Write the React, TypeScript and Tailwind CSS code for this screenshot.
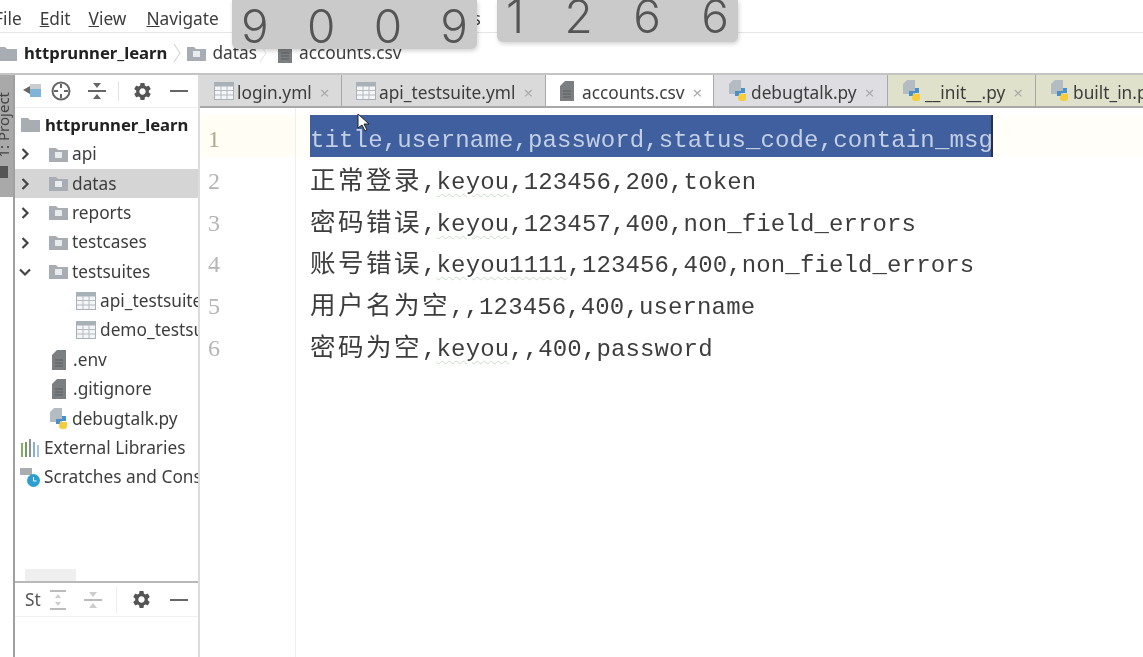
import React from 'react';
import { MdSettings } from 'react-icons/md';

const FolderIcon = ({ big = false }: { big?: boolean }) => (
  <svg width={big ? 21 : 19} height="15" viewBox="0 0 19 15" className="shrink-0">
    <path d="M0 1h7l2 2h10v12H0z" fill="#a7adb2" />
    {!big && <rect x="6" y="5" width="7" height="6" fill="#e9ecee" />}
  </svg>
);

const TableIcon = () => (
  <svg width="20" height="18" viewBox="0 0 20 18" className="shrink-0">
    <rect x="0.5" y="0.5" width="19" height="17" fill="#f3f5f7" stroke="#a9b1b8" />
    <rect x="0.5" y="0.5" width="19" height="4" fill="#a9b1b8" />
    <path d="M7 4v13M13 4v13M1 8.5h18M1 13h18" stroke="#b4bbc1" fill="none" />
  </svg>
);

const FileIcon = () => (
  <svg width="14" height="20" viewBox="0 0 14 20" className="shrink-0">
    <path d="M5 0h9v20H0V5z" fill="#7b7f82" />
    <path d="M3 10h8M3 13h8M3 16h8" stroke="#5b5e61" />
  </svg>
);

const PyIcon = () => (
  <svg width="20" height="22" viewBox="0 0 20 22" className="shrink-0">
    <path d="M5 0h8v14H1V4z" fill="#b4bcc3" />
    <path d="M7 11h6V8h4v5h-6v3H7z" fill="#4a90c8" />
    <path d="M11 14h7v4a3 3 0 0 1-3 3h-2a3 3 0 0 1-3-3z" fill="#f5cc3c" />
  </svg>
);

const Gear = ({ size = 21 }: { size?: number }) => <MdSettings size={size} color="#555" />;

const Minus = () => <div className="h-[2px] w-[18px] bg-[#666]" />;

const Chevron = ({ open = false }: { open?: boolean }) => (
  <svg width="12" height="12" viewBox="0 0 12 12" className="shrink-0">
    <path d={open ? 'M1 3.5l5 5 5-5' : 'M3.5 1l5 5-5 5'} stroke="#444" strokeWidth="2.2" fill="none" />
  </svg>
);

const Crumb = ({ color }: { color: string }) => (
  <svg width="8" height="20" viewBox="0 0 8 20" className="shrink-0">
    <path d="M1 1l6 9-6 9" stroke={color} fill="none" />
  </svg>
);

const Row = ({
  pad,
  icon,
  label,
  arrow,
  active,
  bold,
}: {
  pad: number;
  icon: React.ReactNode;
  label: string;
  arrow?: 'open' | 'closed';
  active?: boolean;
  bold?: boolean;
}) => (
  <div
    className={`relative flex h-[29.4px] items-center overflow-hidden whitespace-nowrap ${active ? 'bg-[#d5d5d5]' : ''} ${bold ? 'text-[16.7px] font-bold text-[#222]' : 'text-[#3d3d3d]'}`}
    style={{ paddingLeft: pad }}
  >
    {arrow && (
      <div className="absolute left-[4px] top-[9px]">
        <Chevron open={arrow === 'open'} />
      </div>
    )}
    <div className="mr-[4px] flex items-center justify-end">{icon}</div>
    {label}
  </div>
);

const Tab = ({
  w,
  bg,
  icon,
  label,
}: {
  w: string;
  bg: string;
  icon: React.ReactNode;
  label: string;
}) => (
  <div className={`flex h-full shrink-0 items-center gap-[3px] overflow-hidden whitespace-nowrap border-r border-[#a8a8a8] pl-[14px] text-[#3d3d3d] ${w} ${bg}`}>
    {icon}
    <span className="relative top-[2px]">{label}</span>
    <span className="relative top-[2px] ml-[5px] text-[17px] leading-none text-[#aaa]">×</span>
  </div>
);

const Cn = ({ children }: { children: string }) => (
  <span className="text-[25.5px] tracking-[2.5px] [font-family:'Noto_Sans_CJK_SC',sans-serif]">{children}</span>
);

const Ky = ({ children }: { children: string }) => (
  <span className="underline decoration-[#c9dcc9] decoration-wavy decoration-1 underline-offset-4">{children}</span>
);

const Counter = ({ digits, className }: { digits: string[]; className: string }) => (
  <div className={`absolute flex justify-between rounded-b-[6px] bg-[#cacaca] text-[46px] font-light text-[#555] shadow-[1px_2px_4px_rgba(0,0,0,0.18)] [font-family:Inter,sans-serif] ${className}`}>
    {digits.map((d, i) => (
      <span key={i}>{d}</span>
    ))}
  </div>
);

const lines: React.ReactNode[] = [
  <span className="inline-block h-[42px] bg-[#3f5f9f] align-top leading-[51px] text-[#c3cfe4] shadow-[inset_-2px_0_0_#26324c]">
    title,username,password,status_code,contain_msg
  </span>,
  <>
    <Cn>正常登录</Cn>,<Ky>keyou</Ky>,123456,200,token
  </>,
  <>
    <Cn>密码错误</Cn>,<Ky>keyou</Ky>,123457,400,non_field_errors
  </>,
  <>
    <Cn>账号错误</Cn>,<Ky>keyou1111</Ky>,123456,400,non_field_errors
  </>,
  <>
    <Cn>用户名为空</Cn>,,123456,400,username
  </>,
  <>
    <Cn>密码为空</Cn>,<Ky>keyou</Ky>,,400,password
  </>,
];

export default function App() {
  return (
    <div className="relative flex h-[657px] w-[1143px] flex-col overflow-hidden bg-white text-[17.3px] text-[#333] blur-[0.5px] [font-family:'Noto_Sans','Open_Sans',sans-serif]">
      {/* menu bar */}
      <div className="flex h-[33px] shrink-0 items-center gap-[18px] border-b border-[#e6e6e6] pt-[5px] text-[#3d3d3d]">
        <span className="-ml-[6px]">File</span>
        <span>
          <u>E</u>dit
        </span>
        <span>
          <u>V</u>iew
        </span>
        <span className="ml-[2px]">
          <u>N</u>avigate
        </span>
        <span className="ml-[202px]">Tools</span>
      </div>

      {/* breadcrumb */}
      <div className="flex h-[40px] shrink-0 items-center text-[#3d3d3d]">
        <div className="-ml-[3px] mr-[6px]">
          <FolderIcon big />
        </div>
        <span className="text-[16.7px] font-bold text-[#222]">httprunner_learn</span>
        <div className="mx-[6px]">
          <Crumb color="#ccc" />
        </div>
        <FolderIcon />
        <span className="ml-[6px]">datas</span>
        <div className="ml-[2px] mr-[11px]">
          <Crumb color="#e2e2e2" />
        </div>
        <FileIcon />
        <span className="ml-[7px]">accounts.csv</span>
      </div>

      {/* main */}
      <div className="flex min-h-0 flex-1 border-t-2 border-[#c4c4c4]">
        {/* tool stripe */}
        <div className="flex w-[15px] shrink-0 flex-col border-r-2 border-[#a0a0a0]">
          <div className="flex h-[122px] flex-col overflow-hidden bg-[#a9a9a9] pt-[17px]">
            <span className="-ml-[4px] w-[14px] rotate-180 whitespace-nowrap text-[15px] leading-[14px] text-[#444] [writing-mode:vertical-rl]">
              1: Project
            </span>
            <div className="mt-[8px] h-[12px] w-[8px] shrink-0 bg-[#555]" />
          </div>
        </div>

        {/* project panel */}
        <div className="flex w-[185px] shrink-0 flex-col border-r-2 border-[#dcdcdc]">
          <div className="flex h-[33px] shrink-0 items-center border-b border-[#eee]">
            <svg width="20" height="16" viewBox="0 0 20 16" className="ml-[7px]">
              <path d="M1 7l7-4v8z" fill="#666" />
              <rect x="8" y="1" width="11" height="13" fill="#7fb4d8" />
              <rect x="8" y="1" width="11" height="5" fill="#c9cdd0" />
            </svg>
            <svg width="20" height="20" viewBox="0 0 20 20" className="ml-[9px]">
              <circle cx="10" cy="10" r="8.5" stroke="#666" strokeWidth="2" fill="none" />
              <path d="M10 3v4M10 13v4M3 10h4M13 10h4" stroke="#666" strokeWidth="2" />
            </svg>
            <svg width="18" height="20" viewBox="0 0 18 20" className="ml-[17px]">
              <path d="M0 10h18" stroke="#666" strokeWidth="2" />
              <path d="M9 7L5 2h8zM9 13l-4 5h8z" fill="#666" />
            </svg>
            <div className="ml-[12px] h-[20px] w-px bg-[#e2e2e2]" />
            <div className="ml-[13px]">
              <Gear />
            </div>
            <div className="ml-[17px]">
              <Minus />
            </div>
          </div>

          <div className="relative min-h-0 flex-1 pt-[2px]">
            <Row pad={5} bold icon={<FolderIcon big />} label="httprunner_learn" />
            <Row pad={34} arrow="closed" icon={<FolderIcon />} label="api" />
            <Row pad={34} arrow="closed" active icon={<FolderIcon />} label="datas" />
            <Row pad={34} arrow="closed" icon={<FolderIcon />} label="reports" />
            <Row pad={34} arrow="closed" icon={<FolderIcon />} label="testcases" />
            <Row pad={34} arrow="open" icon={<FolderIcon />} label="testsuites" />
            <Row pad={61} icon={<TableIcon />} label="api_testsuite.yml" />
            <Row pad={61} icon={<TableIcon />} label="demo_testsuite.yml" />
            <Row pad={37} icon={<div className="mr-[3px]"><FileIcon /></div>} label=".env" />
            <Row pad={37} icon={<div className="mr-[3px]"><FileIcon /></div>} label=".gitignore" />
            <Row pad={34} icon={<div className="-mr-[1px]"><PyIcon /></div>} label="debugtalk.py" />
            <Row
              pad={5}
              icon={
                <svg width="20" height="18" viewBox="0 0 20 18">
                  <path d="M2 4v14" stroke="#8aa86a" strokeWidth="2" />
                  <path d="M6 3v15" stroke="#6b9f5a" strokeWidth="2" />
                  <path d="M10 0v18" stroke="#8b8f94" strokeWidth="2" />
                  <path d="M14 3v15" stroke="#7fb4d8" strokeWidth="2" />
                  <path d="M18 6v12" stroke="#a9c4d8" strokeWidth="2" />
                </svg>
              }
              label="External Libraries"
            />
            <Row
              pad={5}
              icon={
                <svg width="20" height="20" viewBox="0 0 20 20">
                  <path d="M0 1h12v7H0z" fill="#a9adb1" />
                  <circle cx="13.5" cy="13.5" r="6.5" fill="#2c9fd0" />
                  <path d="M13.5 10v4h3" stroke="#fff" fill="none" />
                </svg>
              }
              label="Scratches and Consoles"
            />
            <div className="absolute bottom-0 left-[10px] h-[12px] w-[51px] bg-[#efefef]" />
          </div>

          {/* structure panel */}
          <div className="h-[76px] shrink-0 border-t-2 border-[#b8b8b8]">
            <div className="flex h-[34px] items-center border-b border-[#f0f0f0] text-[#555]">
              <span className="ml-[10px]">St</span>
              <svg width="18" height="20" viewBox="0 0 18 20" className="ml-[8px]">
                <path d="M1 1h16M1 19h16" stroke="#bbb" strokeWidth="2" />
                <path d="M9 4l-3 4h6zM9 16l-3-4h6z" fill="#ccc" />
              </svg>
              <svg width="18" height="20" viewBox="0 0 18 20" className="ml-[17px]">
                <path d="M0 10h18" stroke="#bbb" strokeWidth="2" />
                <path d="M9 7L5 2h8zM9 13l-4 5h8z" fill="#ccc" />
              </svg>
              <div className="ml-[14px] h-[26px] w-px bg-[#eee]" />
              <div className="ml-[14px]">
                <Gear />
              </div>
              <div className="ml-[18px]">
                <Minus />
              </div>
            </div>
          </div>
        </div>

        {/* editor */}
        <div className="flex min-w-0 flex-1 flex-col">
          <div className="flex h-[33px] shrink-0 border-b-2 border-[#a8a8a8]">
            <Tab w="w-[142px]" bg="bg-[#dadada]" icon={<TableIcon />} label="login.yml" />
            <Tab w="w-[204px]" bg="bg-[#dadada]" icon={<TableIcon />} label="api_testsuite.yml" />
            <Tab w="w-[168px]" bg="bg-white" icon={<div className="mr-[5px]"><FileIcon /></div>} label="accounts.csv" />
            <Tab w="w-[174px]" bg="bg-[#dddde2]" icon={<PyIcon />} label="debugtalk.py" />
            <Tab w="w-[148px]" bg="bg-[#e0e1ca]" icon={<PyIcon />} label="__init__.py" />
            <Tab w="w-[120px]" bg="bg-[#e0e1ca]" icon={<PyIcon />} label="built_in.py" />
          </div>
          <div className="relative flex min-h-0 flex-1">
            <div className="w-[96px] shrink-0 border-r border-[#eeeeee] pt-[7px] text-[24px] leading-[49px] text-[#b5b5b5] [font-family:'Liberation_Serif',serif]">
              {lines.map((_, i) => (
                <div key={i} className={`h-[41.8px] pl-[8px] ${i === 0 ? 'bg-[#fffdf4] text-[#b0aa8c]' : ''}`}>
                  {i + 1}
                </div>
              ))}
            </div>
            <div className="min-w-0 flex-1 pt-[7px] text-[24px] leading-[41.8px] tracking-[0.13px] whitespace-pre text-[#3d3d3d] [font-family:'Liberation_Mono',monospace]">
              {lines.map((l, i) => (
                <div key={i} className={`h-[41.8px] pl-[14px] ${i === 0 ? 'bg-[#fffef8]' : ''}`}>
                  {l}
                </div>
              ))}
            </div>
          </div>
        </div>
      </div>

      {/* screen-recording key counters */}
      <Counter digits={['9', '0', '0', '9']} className="left-[232px] top-0 h-[49px] w-[245px] px-[9px] pt-[3px] leading-none" />
      <Counter digits={['1', '2', '6', '6']} className="left-[497px] top-0 h-[42px] w-[241px] px-[9px] leading-[32px]" />

      {/* mouse pointer */}
      <svg width="14" height="20" viewBox="0 0 14 20" className="absolute left-[357px] top-[113px]">
        <path d="M1 1v14l4-3 3 6 2-1-3-6h5z" fill="#fff" stroke="#222" />
      </svg>
    </div>
  );
}
